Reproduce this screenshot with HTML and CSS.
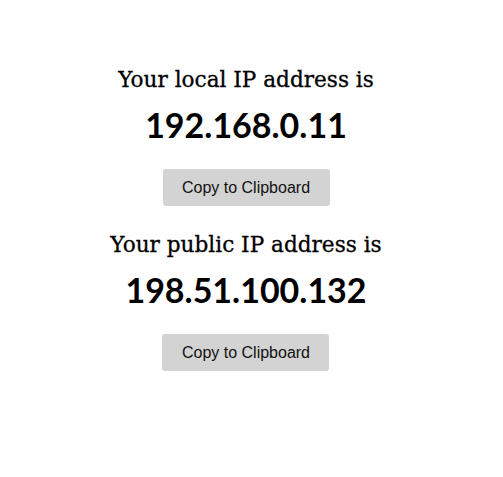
FILE: index.html
```html
<!DOCTYPE html>
<html>
<head>
<meta charset="utf-8">
<link rel="stylesheet" href="styles.css">
</head>
<body>
<main class="page">
  <section class="block">
    <h2 class="label">Your local IP address is</h2>
    <div class="ip">192.168.0.11</div>
    <button class="copy">Copy to Clipboard</button>
  </section>
  <section class="block">
    <h2 class="label">Your public IP address is</h2>
    <div class="ip">198.51.100.132</div>
    <button class="copy">Copy to Clipboard</button>
  </section>
</main>
</body>
</html>
```

FILE: styles.css
```css
html, body {
  margin: 0;
  padding: 0;
  background: #ffffff;
}
.page {
  display: flex;
  flex-direction: column;
  align-items: center;
  padding-top: 65px;
  padding-right: 11px;
  gap: 24px;
}
.block {
  display: flex;
  flex-direction: column;
  align-items: center;
}
.label {
  margin: 0;
  font-family: "DejaVu Serif", serif;
  font-weight: normal;
  font-size: 21.6px;
  line-height: 30px;
  color: #000;
  -webkit-text-stroke: 0.3px #000;
}
.ip {
  margin-top: 10px;
  font-family: Lato, "Open Sans", sans-serif;
  font-weight: bold;
  font-size: 34px;
  line-height: 40px;
  color: #000;
}
.copy {
  margin-top: 24px;
  width: 167px;
  height: 37px;
  background: #d3d3d3;
  border: none;
  border-radius: 3px;
  font-family: "Liberation Sans", Arial, sans-serif;
  font-size: 16px;
  color: #111;
  padding: 0;
}
```
